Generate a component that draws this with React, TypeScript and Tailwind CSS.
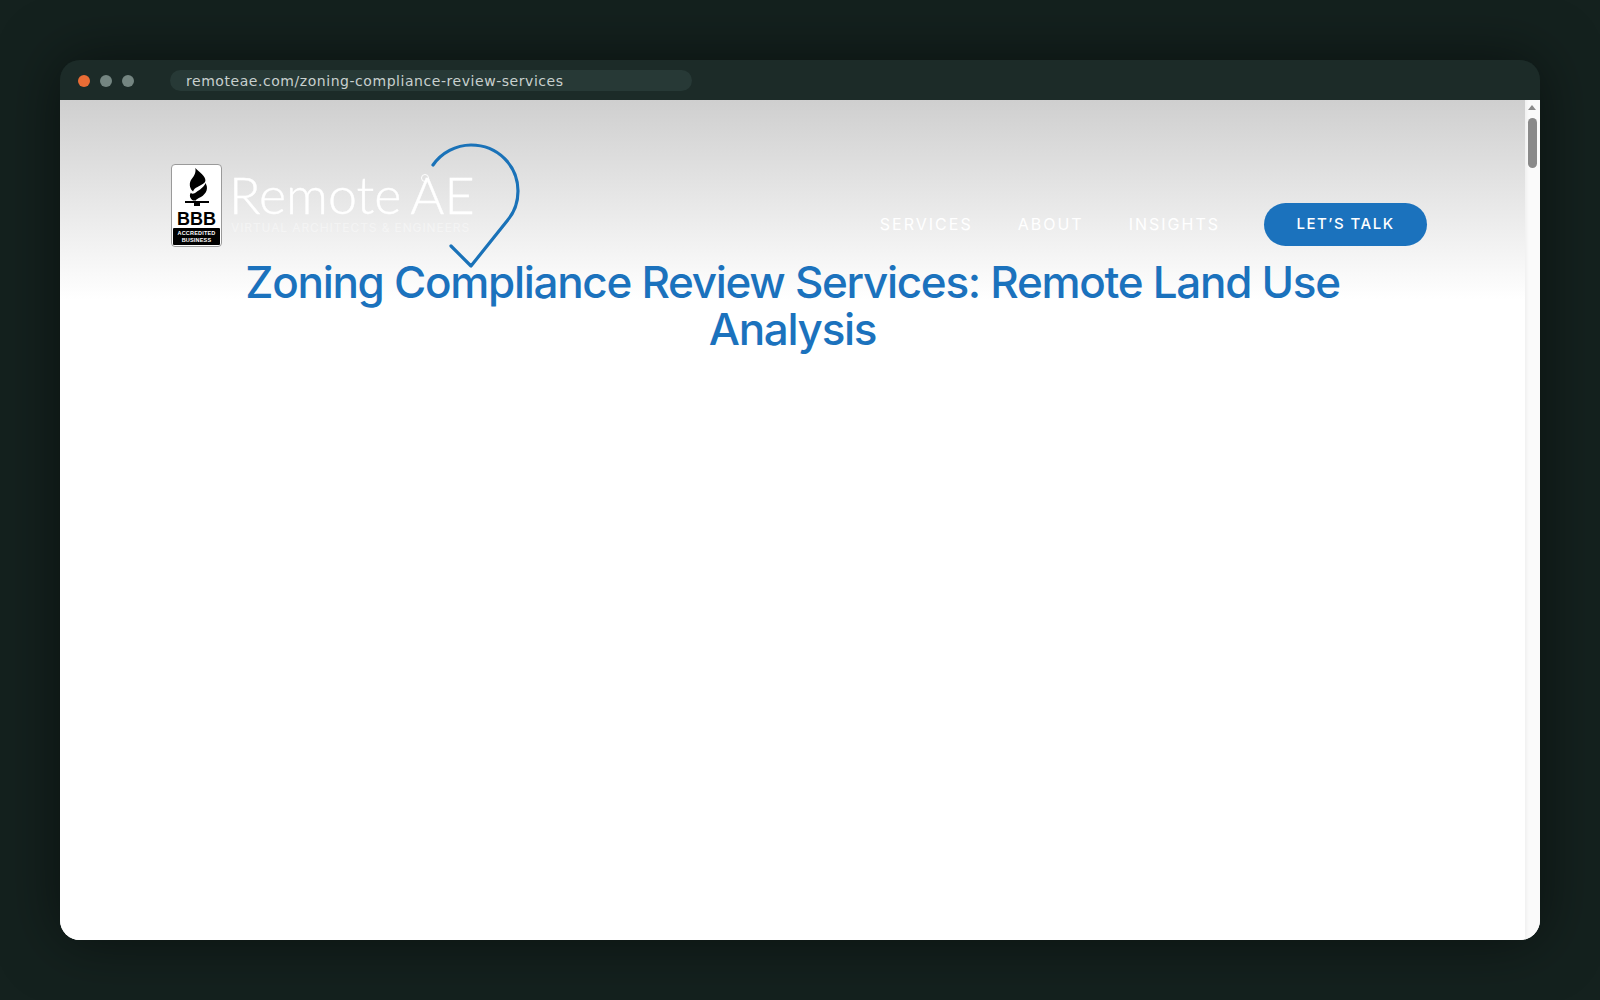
import React from "react";

const dm = { fontFamily: "Inter, 'Liberation Sans', sans-serif" };
const arial = { fontFamily: "'Liberation Sans', sans-serif" };

function Pin() {
  return (
    <svg className="absolute left-0 top-0" width="100" height="130" viewBox="0 0 100 130" fill="none">
      <path d="M7 24 A47 47 0 0 1 45 4 C72 4 92 25 92 50 C92 62 88 72 81 80 L45 125 L25 105" stroke="#1a72b8" strokeWidth="3.2" strokeLinecap="round" strokeLinejoin="round" />
    </svg>
  );
}

function BBB() {
  return (
    <div className="flex h-[83px] w-[51px] shrink-0 flex-col items-center rounded-[4px] border border-[#9a9a9a] bg-white pt-[3px]">
      <svg width="26" height="38" viewBox="0 0 26 38" fill="#000">
        <g transform="translate(-1 0) scale(1.12 1.12)">
          <path d="M11 0 C15 4 20 7 20 11 C20 14 16 15 13 17 C11 18 9.5 19 9 21 C6.5 19 5 15 7 11 C9 8 12 5 11 0 Z" />
          <path d="M20 13.5 C23 18 21 23 16 26 C13 27.5 12 28 11.5 29 L9 29 C6 27 5.5 24 7 22 C8 23.5 10 23 12 21.5 C15 19.5 19 17 20 13.5 Z" />
        </g>
        <rect x="1" y="33" width="24" height="2" />
        <rect x="10" y="35" width="6" height="3" />
      </svg>
      <div className="mt-[6px] text-[18px] font-bold leading-[14px] text-black" style={arial}>BBB</div>
      <div className="mt-[2px] flex h-[17px] w-[47px] flex-col items-center justify-center rounded-[1px] bg-black text-[5.5px] font-bold leading-[6.5px] tracking-[0.2px] text-white" style={arial}>
        <span>ACCREDITED</span>
        <span>BUSINESS</span>
      </div>
    </div>
  );
}

export default function App() {
  return (
    <div className="h-[1000px] w-[1600px] bg-[#14211e] p-[60px]">
      <div className="flex h-[880px] w-[1480px] flex-col overflow-hidden rounded-[20px] shadow-[0_0_60px_rgba(0,0,0,0.5)]">
        <div className="flex h-[40px] shrink-0 items-center bg-[#1c2b28] pl-[17.5px]">
          <div className="mt-[1px] flex gap-[10px]">
            <span className="h-[12px] w-[12px] rounded-full bg-[#e96c35]" />
            <span className="h-[12px] w-[12px] rounded-full bg-[#748581]" />
            <span className="h-[12px] w-[12px] rounded-full bg-[#748581]" />
          </div>
          <div
            className="ml-[36.5px] flex h-[21px] w-[522px] items-center rounded-full bg-[#273936] pl-[16px] pt-[2px] text-[14px] tracking-[0.55px] text-[#c8d0ce]"
            style={{ fontFamily: "'DejaVu Sans', sans-serif" }}
          >
            remoteae.com/zoning-compliance-review-services
          </div>
        </div>
        <div className="flex min-h-0 flex-1 bg-white">
          <main className="min-w-0 flex-1 bg-[linear-gradient(#cfcfcf,#ffffff_200px)]" style={dm}>
            <header className="flex h-[159px] items-start justify-between pl-[111px] pr-[98px] pt-[64px]">
              <div className="relative flex items-center gap-[7px]">
                <BBB />
                <div className="-mt-[7px] text-white">
                  <div className="flex items-baseline text-[52px] font-light leading-[50px] [-webkit-text-stroke:0.4px_white]" style={{ fontFamily: "Lato, sans-serif" }}>
                    <span>Remote</span>
                    <span className="relative ml-[9px]">
                      A
                      <span className="absolute left-[11px] top-[5px] h-[8px] w-[8px] rounded-full border border-white" />
                    </span>
                    <span>E</span>
                  </div>
                  <div className="ml-[2px] mt-[2px] text-[12px] leading-[14px] tracking-[0.9px] text-white/40 [-webkit-text-stroke:0]">VIRTUAL ARCHITECTS &amp; ENGINEERS</div>
                </div>
                <div className="absolute left-[254.5px] top-[-23px] h-[130px] w-[100px]">
                  <Pin />
                </div>
              </div>
              <nav className="mt-[39px] flex items-center text-[16px] font-normal tracking-[2px] text-white">
                <span className="-translate-y-[1px]">SERVICES</span>
                <span className="ml-[45px] -translate-y-[1px]">ABOUT</span>
                <span className="ml-[45px] -translate-y-[1px]">INSIGHTS</span>
                <span className="ml-[44px] flex h-[43px] w-[163px] items-center justify-center rounded-full bg-[#1b72bd] text-[15px] font-medium tracking-[1.5px]">LET’S TALK</span>
              </nav>
            </header>
            <h1 className="mx-auto w-[1200px] text-center text-[44px] font-medium leading-[47px] tracking-[-1.3px] text-[#1b72bd]">
              Zoning Compliance Review Services: Remote Land Use Analysis
            </h1>
          </main>
          <div className="w-[15px] shrink-0 bg-[#fafafa] pl-[3px] pt-[5px] shadow-[inset_4px_0_4px_-3px_rgba(0,0,0,0.06)]">
            <div className="h-0 w-0 border-x-[4.5px] border-b-[5px] border-x-transparent border-b-[#8a8a8a]" />
            <div className="mt-[8px] h-[50px] w-[9px] rounded-[5px] bg-[#8a8a8a]" />
          </div>
        </div>
      </div>
    </div>
  );
}
